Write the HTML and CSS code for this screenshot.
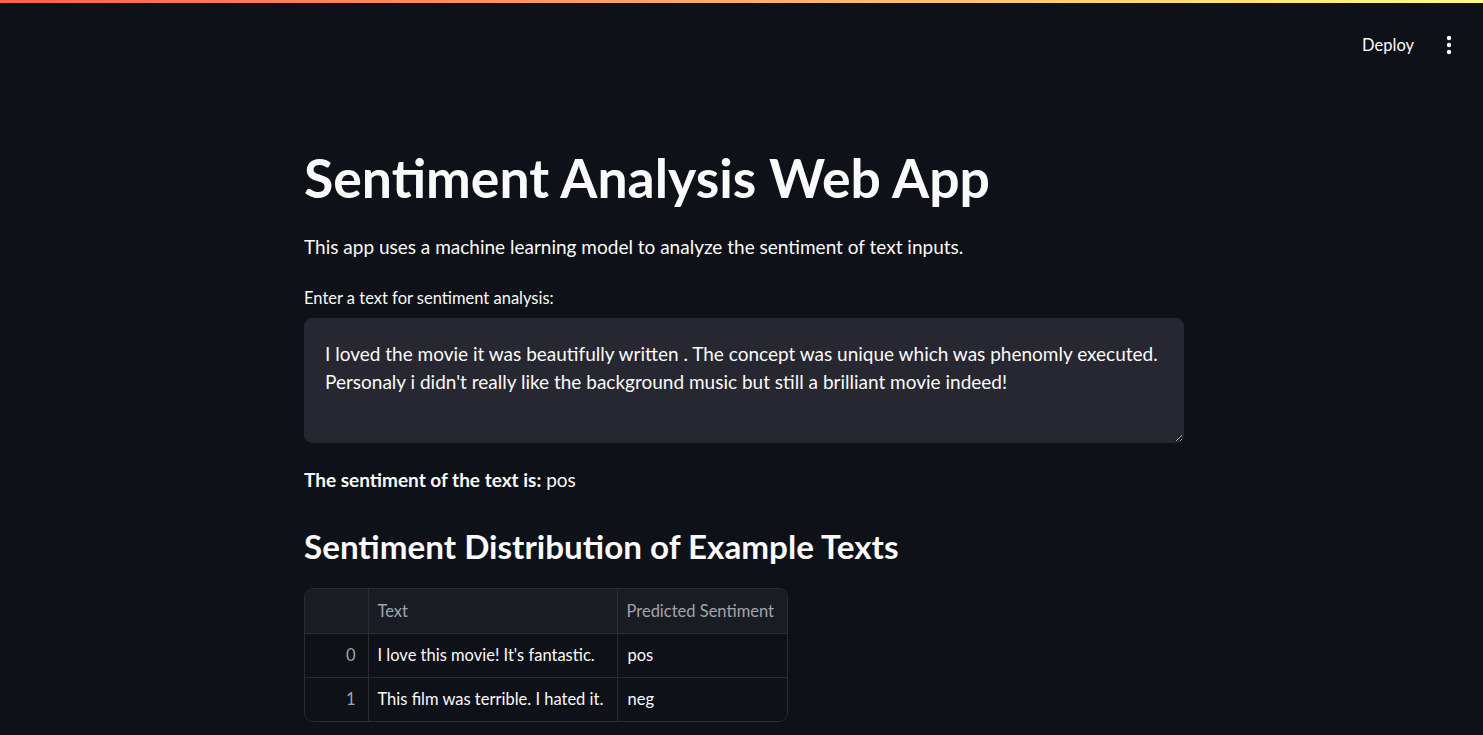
FILE: index.html
```html
<!DOCTYPE html>
<html lang="en">
<head>
<meta charset="utf-8">
<title>Sentiment Analysis Web App</title>
<link rel="stylesheet" href="styles.css">
</head>
<body>
<div class="decoration"></div>
<header class="header">
  <button class="deploy">Deploy</button>
  <button class="menu" aria-label="Main menu">
    <svg width="6" height="20" viewBox="0 0 6 20"><circle cx="3" cy="3" r="2.2" fill="#fafafa"/><circle cx="3" cy="10" r="2.2" fill="#fafafa"/><circle cx="3" cy="17" r="2.2" fill="#fafafa"/></svg>
  </button>
</header>
<div class="app">
  <main class="main">
    <h1 class="title">Sentiment Analysis Web App</h1>
    <p class="intro">This app uses a machine learning model to analyze the sentiment of text inputs.</p>
    <label class="label" for="txt">Enter a text for sentiment analysis:</label>
    <textarea id="txt" class="textarea">I loved the movie it was beautifully written . The concept was unique which was phenomly executed. Personaly i didn't really like the background music but still a brilliant movie indeed!</textarea>
    <p class="result"><strong>The sentiment of the text is:</strong> pos</p>
    <h3 class="subtitle">Sentiment Distribution of Example Texts</h3>
    <div class="frame">
      <table class="grid">
        <thead>
          <tr><th class="idx"></th><th class="c-text">Text</th><th class="c-pred">Predicted Sentiment</th></tr>
        </thead>
        <tbody>
          <tr><td class="idx">0</td><td>I love this movie! It's fantastic.</td><td class="pad">pos</td></tr>
          <tr><td class="idx">1</td><td>This film was terrible. I hated it.</td><td class="pad">neg</td></tr>
        </tbody>
      </table>
    </div>
  </main>
</div>
</body>
</html>
```
FILE: styles.css
```css
* { box-sizing: border-box; }
html, body { margin: 0; padding: 0; }
body {
  background: #0e1117;
  color: #fafafa;
  font-family: "Lato", "Noto Sans", sans-serif;
  height: 735px;
  overflow: hidden;
}
.decoration {
  height: 3px;
  background: linear-gradient(90deg, rgb(255, 95, 80), rgb(255, 253, 128));
}
.header {
  height: 84px;
  display: flex;
  justify-content: flex-end;
  align-items: center;
  gap: 4px;
  padding-right: 18px;
}
.deploy {
  background: transparent;
  border: none;
  color: #fafafa;
  font-family: inherit;
  font-size: 16.5px;
  padding: 6px 15px;
  line-height: 24px;
}
.menu {
  background: transparent;
  border: none;
  width: 32px;
  height: 32px;
  display: flex;
  align-items: center;
  justify-content: center;
  padding: 0;
}
.app { padding-left: 5px; }
.main {
  width: 880px;
  margin: 0 auto;
}
.title {
  margin: 58px 0 0;
  font-size: 53.5px;
  font-weight: 700;
  line-height: 64px;
}
.intro {
  margin: 23px 0 0;
  font-size: 19px;
  line-height: 30.4px;
}
.label {
  display: block;
  margin-top: 22.5px;
  font-size: 16.5px;
  line-height: 26.4px;
}
.textarea {
  display: block;
  margin-top: 6.5px;
  width: 880px;
  height: 125px;
  background: #262730;
  border: 1px solid #262730;
  border-radius: 8px;
  color: #fafafa;
  font-family: inherit;
  font-size: 19px;
  line-height: 28px;
  padding: 21px 20px 10px;
  resize: vertical;
  outline: none;
  color-scheme: dark;
}
.result {
  margin: 22px 0 0;
  font-size: 19px;
  line-height: 30.4px;
}
.result strong { font-weight: 700; }
.subtitle {
  margin: 31px 0 0;
  font-size: 33.2px;
  font-weight: 700;
  line-height: 40px;
}
.frame {
  margin-top: 22px;
  width: 484px;
  border: 1px solid #2a2c33;
  border-radius: 9px;
  overflow: hidden;
}
.grid {
  width: 100%;
  border-collapse: collapse;
  font-size: 16.5px;
  table-layout: fixed;
}
.grid th, .grid td {
  height: 44px;
  padding: 0 9px;
  text-align: left;
  white-space: nowrap;
  border-right: 1px solid #2a2c33;
  border-bottom: 1px solid #2a2c33;
  font-weight: 400;
}
.grid tr > :last-child { border-right: none; }
.grid tbody tr:last-child td { border-bottom: none; }
.grid thead th {
  background: #1a1c24;
  color: #a1a4ab;
}
.grid .idx { width: 63px; text-align: right; padding-right: 12px; color: #a1a4ab; }
.grid .c-text { width: 249px; }
.grid td.pad { padding-left: 10px; }
.grid tbody td { background: #0e1117; color: #fafafa; }
.grid tbody td.idx { color: #a1a4ab; }
```
